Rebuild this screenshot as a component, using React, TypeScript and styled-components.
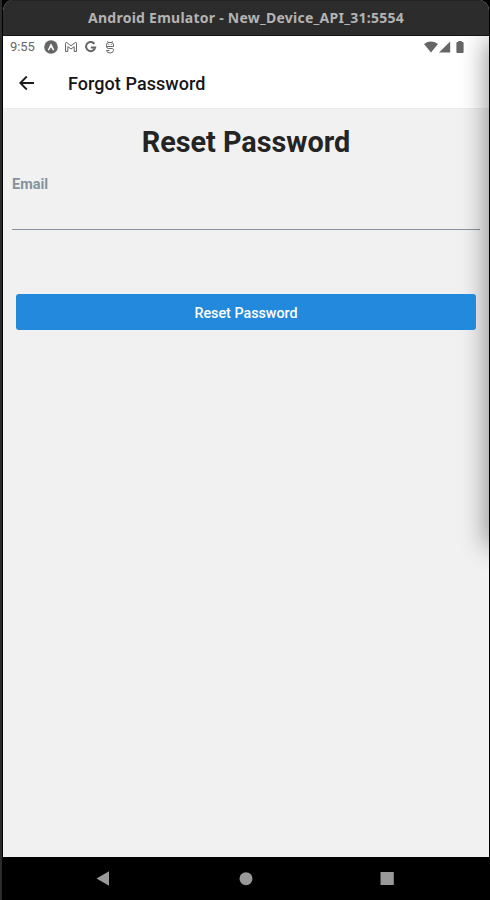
import React from "react";
import styled, { createGlobalStyle } from "styled-components";

const GlobalStyle = createGlobalStyle`
  * { box-sizing: border-box; }
  body { margin: 0; background: #222; font-family: Roboto, "Liberation Sans", sans-serif; }
`;

const Desktop = styled.div`
  width: 490px;
  height: 900px;
  padding: 0 1px 0 2px;
  overflow: hidden;
  background: linear-gradient(90deg, #2b2b2b 2px, #000 2px);
`;

const EmulatorWindow = styled.main`
  position: relative;
  height: 900px;
  display: flex;
  flex-direction: column;
  border-left: 1px solid #000;
  border-radius: 11px 10px 0 0;
  overflow: hidden;
  background: #f1f1f1;
`;

const TitleBar = styled.header`
  height: 36px;
  flex: none;
  display: flex;
  justify-content: center;
  background: #2c2c2c;
  border-top: 1px solid #242424;
  border-bottom: 1px solid #151515;
  color: #b3b3b3;
  font: 700 14px/33px "Noto Sans", sans-serif;
  letter-spacing: 0.25px;
  white-space: nowrap;
`;

const StatusBar = styled.div`
  height: 22px;
  flex: none;
  display: flex;
  justify-content: space-between;
  padding: 0 25px 0 7px;
  background: #fff;
  color: #666;
`;

const StatusGroup = styled.div`
  display: flex;
  align-items: center;
`;

const Clock = styled.span`
  width: 34px;
  font-size: 13px;
  line-height: 22px;
  letter-spacing: -0.1px;
`;

const Glyph = styled.svg<{ $gap?: number }>`
  display: block;
  flex: none;
  margin-left: ${(p) => p.$gap ?? 0}px;
`;

const AppBar = styled.div`
  height: 50px;
  flex: none;
  display: flex;
  align-items: center;
  padding-left: 15px;
  background: #fff;
  color: #151517;
`;

const AppTitle = styled.h2`
  margin: 1px 0 0 32px;
  font-size: 18px;
  font-weight: 500;
  line-height: 24px;
  letter-spacing: 0.06px;
`;

const Content = styled.section`
  flex: 1;
  display: flex;
  flex-direction: column;
  padding: 16px 9px 0;
  border-top: 1px solid #ebebeb;
`;

const Heading = styled.h1`
  margin: 0;
  color: #242424;
  font-size: 28.8px;
  font-weight: 700;
  line-height: 35px;
  text-align: center;
`;

const FieldLabel = styled.label`
  margin-top: 15px;
  color: #86939e;
  font-size: 14.5px;
  font-weight: 700;
  line-height: 20px;
`;

const Field = styled.input`
  height: 43px;
  margin-top: -8px;
  padding: 0;
  border: 0;
  border-bottom: 1px solid #86939e;
  outline: 0;
  background: transparent;
  font: 16px Roboto, sans-serif;
`;

const SubmitButton = styled.button`
  position: relative;
  z-index: 2;
  height: 36px;
  margin: 64px 4px 0;
  padding: 2px 0 0;
  border: 0;
  border-radius: 3px;
  background: #2289dc;
  background-clip: padding-box;
  color: #fff;
  font: 500 14.3px/34px Roboto, sans-serif;
`;

const EdgeShadow = styled.div`
  position: absolute;
  z-index: 1;
  top: 36px;
  right: 0;
  bottom: 43px;
  width: 40px;
  overflow: hidden;
  pointer-events: none;

  &::after {
    content: "";
    position: absolute;
    left: 40px;
    top: 6px;
    width: 40px;
    height: 501px;
    box-shadow: 0 0 26px 3px rgba(0, 0, 0, 0.4);
  }
`;

const NavBar = styled.nav`
  height: 43px;
  flex: none;
  display: flex;
  align-items: center;
  padding-left: 93px;
  background: #000;
  color: #999;
`;

export default function App() {
  return (
    <>
      <GlobalStyle />
      <Desktop>
        <EmulatorWindow>
          <TitleBar>Android Emulator - New_Device_API_31:5554</TitleBar>
          <StatusBar>
            <StatusGroup>
              <Clock>9:55</Clock>
              <Glyph width="14" height="14" viewBox="0 0 14 14">
                <circle cx="7" cy="7" r="6.8" fill="#666" />
                <path d="M3.7 10 6.3 4.5Q7 3.2 7.7 4.5L10.3 10 9.1 10.5 7 7.2 4.9 10.5Z" fill="#fff" />
              </Glyph>
              <Glyph $gap={6} width="14" height="12" viewBox="0 0 14 12" fill="none" stroke="#666">
                <path d="M1.5 10.5V2.3Q1.6 1.2 2.8 1.6L7 4.8 11.2 1.6Q12.4 1.2 12.5 2.3V10.5H10.2V5.6L7 8 3.8 5.6V10.5Z" />
              </Glyph>
              <Glyph $gap={6} width="13" height="12" viewBox="0 0 13 12" fill="none" stroke="#666" strokeWidth="2">
                <path d="M10.4 2.8A4.6 4.6 0 1 0 11.2 6.4H6.8" />
              </Glyph>
              <Glyph $gap={8} width="10" height="13" viewBox="0 0 10 13" fill="none" stroke="#666">
                <path d="M1.5 5.5V4Q1.5 1.5 4 1.5H6Q8.5 1.5 8.5 4V5.5H1.5M1.5 5.5Q1.5 7.5 3.5 7.5H7.5Q8.7 7.7 8.5 9.3 8.3 12 5 12 1.8 12 1.5 9.5H4.5M2.5.2 3.3 1.6M7.5.2 6.7 1.6" />
                <path d="M3.2 3.6h1M5.8 3.6h1" strokeWidth=".8" />
              </Glyph>
            </StatusGroup>
            <StatusGroup>
              <Glyph width="14" height="12" viewBox="0 0 14 12" fill="#666">
                <path d="M0 3Q7-1.9 14 3L7 11.5Z" />
              </Glyph>
              <Glyph $gap={1} width="12" height="12" viewBox="0 0 12 12" fill="#666">
                <path d="M0 11.5 11.2.4V11.5Z" />
              </Glyph>
              <Glyph $gap={5} width="8" height="12" viewBox="0 0 8 12" fill="#666">
                <path d="M2.3 1V0H5.7V1H6.7Q7.6 1 7.6 2V11Q7.6 12 6.7 12H1.3Q.4 12 .4 11V2Q.4 1 1.3 1Z" />
              </Glyph>
            </StatusGroup>
          </StatusBar>
          <AppBar>
            <Glyph width="18" height="18" viewBox="0 0 18 18" fill="none" stroke="#1c1c1e" strokeWidth="1.8">
              <path d="M16 9H2.5M8.8 2.5 2.3 9 8.8 15.5" />
            </Glyph>
            <AppTitle>Forgot Password</AppTitle>
          </AppBar>
          <Content>
            <Heading>Reset Password</Heading>
            <FieldLabel htmlFor="email">Email</FieldLabel>
            <Field id="email" type="email" />
            <SubmitButton type="button">Reset Password</SubmitButton>
          </Content>
          <NavBar>
            <Glyph width="14" height="16" viewBox="0 0 14 16" fill="#999">
              <path d="M.5 7.5 13 .2V14.8Z" />
            </Glyph>
            <Glyph $gap={129} width="14" height="14" viewBox="0 0 14 14" fill="#999">
              <circle cx="7" cy="6.7" r="6.5" />
            </Glyph>
            <Glyph $gap={127} width="14" height="14" viewBox="0 0 14 14" fill="#999">
              <rect x=".5" y="0" width="13.3" height="13" rx=".5" />
            </Glyph>
          </NavBar>
          <EdgeShadow />
        </EmulatorWindow>
      </Desktop>
    </>
  );
}
